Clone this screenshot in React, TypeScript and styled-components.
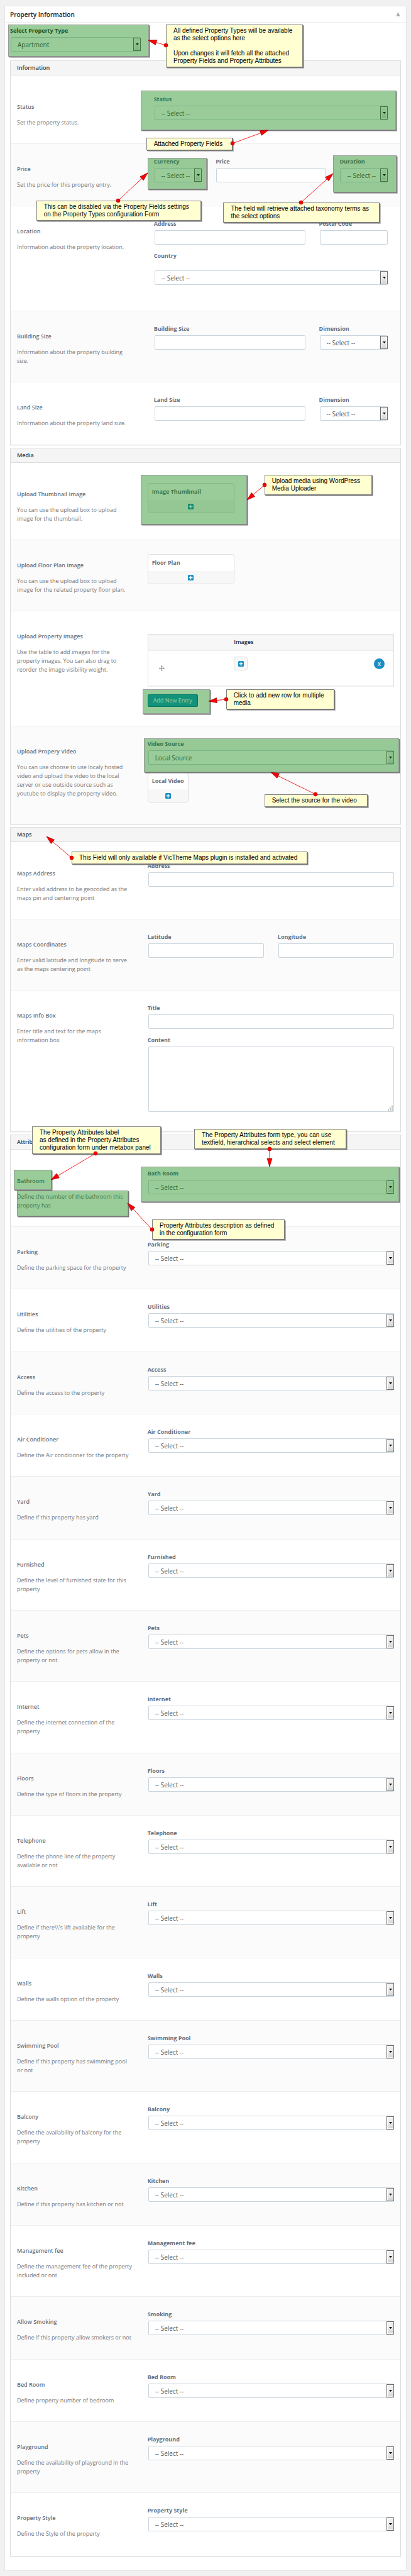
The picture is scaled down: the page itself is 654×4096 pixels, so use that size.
import React, { ReactNode, useId } from "react";
import styled, { createGlobalStyle, css } from "styled-components";

const GlobalStyle = createGlobalStyle`
  *, *::before, *::after { box-sizing: border-box; }
  body {
    margin: 0;
    background: #f1f1f1;
    color: #777;
    font-family: "Open Sans", "Noto Sans", sans-serif;
    font-size: 9px;
    line-height: 14px;
  }
  h2, h3, h4, p { margin: 0; }
  button, input, select, textarea { font-family: inherit; margin: 0; }
`;

/* ---------- page frame ---------- */

const Page = styled.main`
  padding: 9px 7px 8px;
`;

const Postbox = styled.section`
  background: #fff;
  border: 1px solid #e5e5e5;
`;

const PostboxHeader = styled.header`
  display: flex;
  align-items: center;
  justify-content: space-between;
  height: 26px;
  padding: 0 9px 0 8px;
  border-bottom: 1px solid #eee;
`;

const PostboxTitle = styled.h2`
  font-size: 10px;
  line-height: 14px;
  font-weight: 600;
  color: #23282d;
`;

const ToggleButton = styled.button`
  display: flex;
  padding: 0;
  border: 0;
  background: none;
`;

const PostboxBody = styled.div`
  padding: 7px 8px 18px;
`;

const TypeField = styled.div`
  width: 33.5%;
  margin-bottom: 14px;
`;

/* ---------- sections and rows ---------- */

const SectionBox = styled.section`
  border: 1px solid #ddd;
  box-shadow: 0 1px 1px rgba(0, 0, 0, 0.04);
  margin-bottom: 4px;
`;

const SectionHeader = styled.header`
  position: relative;
  display: flex;
  align-items: center;
  height: 23px;
  padding: 0 10px;
  background: #f5f5f5;
  border-bottom: 1px solid #ddd;
`;

const SectionTitle = styled.h3`
  font-size: 9px;
  line-height: 12px;
  font-weight: 600;
  color: #32373c;
`;

const Rows = styled.div`
  padding-top: 10px;
`;

const RowBox = styled.div<{ $minHeight?: number }>`
  display: flex;
  min-height: ${(p) => p.$minHeight ?? 0}px;
  border-bottom: 1px solid #eee;

  &:nth-child(even) {
    background: #fbfbfb;
  }
  &:nth-child(3n) {
    padding-bottom: 1px;
  }
  &:last-child {
    border-bottom-color: transparent;
  }
`;

const RowInfo = styled.div`
  flex: 0 0 33.33%;
  padding: 34px 10px 26px;
`;

const RowTitle = styled.h4`
  position: relative;
  width: fit-content;
  margin-bottom: 12px;
  font-size: 9px;
  line-height: 12px;
  font-weight: 600;
  color: #667080;
`;

const RowText = styled.div`
  position: relative;
  white-space: pre-line;
`;

const RowFields = styled.div<{ $top?: number; $inset?: boolean }>`
  flex: 1;
  min-width: 0;
  padding: ${(p) => p.$top ?? 22}px ${(p) => (p.$inset ? 20 : 10)}px 20px
    ${(p) => (p.$inset ? 21 : 11)}px;
  display: flex;
  flex-direction: column;
  gap: 12px;
`;

const Columns = styled.div`
  display: grid;
  grid-template-columns: repeat(12, minmax(0, 1fr));
  column-gap: 22px;
`;

const Column = styled.div<{ $span: number }>`
  grid-column: span ${(p) => p.$span};
`;

/* ---------- form controls ---------- */

const Anchor = styled.div<{ $fit?: boolean }>`
  position: relative;
  ${(p) => p.$fit && "width: fit-content;"}
`;

const FieldLabel = styled.label<{ $dark?: boolean; $loose?: boolean }>`
  display: block;
  margin-bottom: ${(p) => (p.$loose ? 17 : 4)}px;
  font-size: 9px;
  line-height: 12px;
  font-weight: 700;
  color: ${(p) => (p.$dark ? "#32373c" : "#667080")};
`;

const controlStyle = css`
  display: block;
  width: 100%;
  border: 1px solid #c9d5de;
  border-radius: 2px;
  background: #fff;
  color: #555;
  font-size: 10px;
`;

const TextInput = styled.input`
  ${controlStyle}
  height: 23px;
  padding: 0 10px;
`;

const TextArea = styled.textarea`
  ${controlStyle}
  height: 104px;
  padding: 6px 10px;
  resize: none;
`;

const SelectInput = styled.select`
  ${controlStyle}
  height: 23px;
  padding: 0 12px 0 10px;
  appearance: none;
`;

const ControlFrame = styled.div`
  position: relative;
  padding-left: 1px;
`;

const DropMark = styled.span`
  position: absolute;
  top: 1px;
  right: 0;
  bottom: 1px;
  width: 12px;
  display: flex;
  align-items: center;
  justify-content: center;
  border: 1px solid #707070;
  background: linear-gradient(#f2f2f2, #ebebeb 50%, #d4d4d4);
  box-shadow: inset 0 0 0 1px #f8f8f8;
  pointer-events: none;
`;

const Grip = styled.svg`
  position: absolute;
  right: 2px;
  bottom: 2px;
  pointer-events: none;
`;

/* ---------- media widgets ---------- */

const UploadBox = styled.div<{ $wide?: boolean }>`
  position: relative;
  width: ${(p) => (p.$wide ? "138px" : "fit-content")};
  border: 1px solid #ddd;
  border-radius: 4px;
  background: #fff;
`;

const UploadTitle = styled.div`
  padding: 7px 6px;
  font-weight: 700;
  line-height: 12px;
  color: #667080;
`;

const UploadButton = styled.button`
  display: flex;
  align-items: center;
  justify-content: center;
  width: 100%;
  height: 20px;
  padding: 0;
  border: 0;
  border-radius: 0 0 4px 4px;
  background: #f7f7f7;
`;

const ImageTable = styled.table`
  width: 100%;
  table-layout: fixed;
  border-collapse: separate;
  border-spacing: 0;
  border: 1px solid #ddd;
  border-bottom: 2px solid #eee;
  background: #fff;

  th {
    height: 26px;
    padding: 0;
    background: #f7f7f7;
    border-bottom: 2px solid #eee;
    font-weight: 600;
    text-align: left;
    color: #23282d;
  }
  td {
    height: 55px;
    padding: 9px 14px 0 0;
    vertical-align: top;
  }
  td:first-child {
    padding: 22px 0 0 17px;
  }
`;

const SmallUpload = styled.button`
  display: flex;
  align-items: center;
  justify-content: center;
  width: 22px;
  height: 22px;
  padding: 0;
  border: 1px solid #ddd;
  border-radius: 4px;
  background: #f7f7f7;
`;

const RemoveButton = styled.button`
  display: flex;
  align-items: center;
  justify-content: center;
  width: 17px;
  height: 17px;
  margin: 3px 0 0 auto;
  padding: 0;
  border: 0;
  border-radius: 50%;
  background: #158fc4;
  color: #fff;
  font-size: 8px;
  line-height: 10px;
  font-weight: 600;
`;

const PrimaryButton = styled.button`
  display: block;
  height: 20px;
  padding: 0 8px;
  border: 1px solid #0073aa;
  border-radius: 2px;
  background: #1e9fcc;
  color: #fff;
  font-size: 9px;
  line-height: 12px;
`;

/* ---------- annotations over the form ---------- */

const Highlight = styled.span<{ $inset: string }>`
  position: absolute;
  z-index: 1;
  inset: ${(p) => p.$inset};
  border: 1px solid rgba(128, 128, 128, 0.8);
  background: rgba(0, 128, 0, 0.4);
  background-clip: padding-box;
  box-shadow: 1px 1px 0 #777, 2px 2px 0 rgba(0, 0, 0, 0.25);
  pointer-events: none;
`;

const Note = styled.aside<{ $left: number; $top: number; $width: number }>`
  position: absolute;
  z-index: 2;
  left: ${(p) => p.$left}px;
  top: ${(p) => p.$top}px;
  width: ${(p) => p.$width}px;
  padding: 3px 0 3px 11px;
  border: 1px solid #808080;
  background: #ffffd2;
  box-shadow: 1px 1px 0 #777, 2px 2px 0 rgba(0, 0, 0, 0.25);
  color: #000;
  font-family: "Liberation Sans", Arial, sans-serif;
  font-size: 10px;
  line-height: 12px;
  font-weight: 400;
  white-space: pre;
`;

const PointerSvg = styled.svg`
  position: absolute;
  z-index: 3;
  left: 0;
  top: 0;
  overflow: visible;
  pointer-events: none;
`;

type Point = [number, number];

/* A dot on the note's edge, a thin line, and an arrow head at the tip. */
function Pointer({ from, to }: { from: Point; to: Point }) {
  const angle = (Math.atan2(to[1] - from[1], to[0] - from[0]) * 180) / Math.PI;
  return (
    <PointerSvg width="1" height="1" aria-hidden="true">
      <line x1={from[0]} y1={from[1]} x2={to[0]} y2={to[1]} stroke="#ff2020" />
      <path
        d="M0 0 L-13 -4 L-13 4 Z"
        transform={`translate(${to[0]} ${to[1]}) rotate(${angle})`}
        fill="#f00"
        stroke="#900"
        strokeWidth="0.7"
      />
      <circle cx={from[0]} cy={from[1]} r="3" fill="#f00" stroke="#a00" strokeWidth="0.7" />
    </PointerSvg>
  );
}

/* ---------- icons ---------- */

const PlusIcon = () => (
  <svg width="9" height="9" viewBox="0 0 12 12" aria-hidden="true">
    <rect width="12" height="12" rx="2" fill="#158fc4" />
    <path d="M6 2v8M2 6h8" stroke="#fff" strokeWidth="2" />
  </svg>
);

const MoveIcon = () => (
  <svg width="9" height="9" viewBox="0 0 12 12" aria-hidden="true">
    <path d="M6 1v10M1 6h10" stroke="#777" strokeWidth="1.2" />
    <path
      d="M6 0l2 2.4H4zM6 12l2-2.4H4zM0 6l2.4-2v4zM12 6l-2.4-2v4z"
      fill="#777"
    />
  </svg>
);

/* ---------- composed fields ---------- */

type FieldProps = { label: string; dark?: boolean; loose?: boolean; children?: ReactNode };

function SelectField({
  label,
  dark,
  loose,
  value = "-- Select --",
  children,
}: FieldProps & { value?: string }) {
  const id = useId();
  return (
    <Anchor>
      <FieldLabel htmlFor={id} $dark={dark} $loose={loose}>
        {label}
      </FieldLabel>
      <ControlFrame>
        <SelectInput id={id}>
          <option>{value}</option>
        </SelectInput>
        <DropMark>
          <svg width="5" height="3" viewBox="0 0 5 3" aria-hidden="true">
            <path d="M0 0h5L2.5 3z" fill="#000" />
          </svg>
        </DropMark>
      </ControlFrame>
      {children}
    </Anchor>
  );
}

function TextField({ label }: FieldProps) {
  const id = useId();
  return (
    <Anchor>
      <FieldLabel htmlFor={id}>{label}</FieldLabel>
      <ControlFrame>
        <TextInput id={id} type="text" />
      </ControlFrame>
    </Anchor>
  );
}

function AreaField({ label }: FieldProps) {
  const id = useId();
  return (
    <Anchor>
      <FieldLabel htmlFor={id}>{label}</FieldLabel>
      <ControlFrame>
        <TextArea id={id} />
        <Grip width="8" height="8" viewBox="0 0 8 8" aria-hidden="true">
          <path d="M6 0h2v2H6zM3 3h2v2H3zM6 3h2v2H6zM0 6h2v2H0zM3 6h2v2H3zM6 6h2v2H6z" fill="#bbb" />
        </Grip>
      </ControlFrame>
    </Anchor>
  );
}

function Upload({ title, wide, children }: { title: string; wide?: boolean; children?: ReactNode }) {
  return (
    <UploadBox $wide={wide}>
      <UploadTitle>{title}</UploadTitle>
      <UploadButton type="button" aria-label={`Upload ${title}`}>
        <PlusIcon />
      </UploadButton>
      {children}
    </UploadBox>
  );
}

type RowProps = {
  title: string;
  text: string;
  minHeight?: number;
  top?: number;
  inset?: boolean;
  titleNotes?: ReactNode;
  textNotes?: ReactNode;
  children: ReactNode;
};

function Row({ title, text, minHeight, top, inset, titleNotes, textNotes, children }: RowProps) {
  return (
    <RowBox $minHeight={minHeight}>
      <RowInfo>
        <RowTitle>
          {title}
          {titleNotes}
        </RowTitle>
        <RowText>
          {text}
          {textNotes}
        </RowText>
      </RowInfo>
      <RowFields $top={top} $inset={inset}>
        {children}
      </RowFields>
    </RowBox>
  );
}

function Section({ title, notes, children }: { title: string; notes?: ReactNode; children: ReactNode }) {
  return (
    <SectionBox>
      <SectionHeader>
        <SectionTitle>{title}</SectionTitle>
        {notes}
      </SectionHeader>
      <Rows>{children}</Rows>
    </SectionBox>
  );
}

const attributes: { title: string; label?: string; text: string }[] = [
  { title: "Parking", text: "Define the parking space for the property" },
  { title: "Utilities", text: "Define the utilities of the property" },
  { title: "Access", text: "Define the access to the property" },
  { title: "Air Conditioner", text: "Define the Air conditioner for the property" },
  { title: "Yard", text: "Define if this property has yard" },
  { title: "Furnished", text: "Define the level of furnished state for this\nproperty" },
  { title: "Pets", text: "Define the options for pets allow in the\nproperty or not" },
  { title: "Internet", text: "Define the internet connection of the\nproperty" },
  { title: "Floors", text: "Define the type of floors in the property" },
  { title: "Telephone", text: "Define the phone line of the property\navailable or not" },
  { title: "Lift", text: "Define if there\\\\'s lift available for the\nproperty" },
  { title: "Walls", text: "Define the walls option of the property" },
  { title: "Swimming Pool", text: "Define if this property has swimming pool\nor not" },
  { title: "Balcony", text: "Define the availability of balcony for the\nproperty" },
  { title: "Kitchen", text: "Define if this property has kitchen or not" },
  { title: "Management fee", text: "Define the management fee of the property\nincluded or not" },
  { title: "Allow Smoking", label: "Smoking", text: "Define if this property allow smokers or not" },
  { title: "Bed Room", text: "Define property number of bedroom" },
  { title: "Playground", text: "Define the availability of playground in the\nproperty" },
  { title: "Property Style", text: "Define the Style of the property" },
];

export default function App() {
  return (
    <Page>
      <GlobalStyle />
      <Postbox>
        <PostboxHeader>
          <PostboxTitle>Property Information</PostboxTitle>
          <ToggleButton type="button" aria-label="Toggle panel">
            <svg width="7" height="7" viewBox="0 0 7 7" aria-hidden="true">
              <path d="M3.5 0L6.5 7h-6z" fill="#aaa" />
            </svg>
          </ToggleButton>
        </PostboxHeader>

        <PostboxBody>
          <TypeField>
            <SelectField label="Select Property Type" value="Apartment" dark>
              <Highlight $inset="-4px -13px -8px -3px" />
              <Note $left={248} $top={-4} $width={218}>
                {"All defined Property Types will be available\nas the select options here\n\nUpon changes it will fetch all the attached\nProperty Fields and Property Attributes"}
              </Note>
              <Pointer from={[248, 29]} to={[220, 21]} />
            </SelectField>
          </TypeField>

          <Section title="Information">
            <Row title="Status" text="Set the property status." inset>
              <SelectField label="Status">
                <Highlight $inset="-8px -13px -16px -21px" />
                <Note $left={-12} $top={67} $width={137}>
                  Attached Property Fields
                </Note>
                <Pointer from={[125, 76]} to={[182, 55]} />
              </SelectField>
            </Row>
            <Row title="Price" text="Set the price for this property entry." inset>
              <Columns>
                <Column $span={3}>
                  <SelectField label="Currency">
                    <Highlight $inset="0 -8px -11px -10px" />
                    <Note $left={-187} $top={68} $width={262}>
                      {"This can be disabled via the Property Fields settings\non the Property Types configuration Form"}
                    </Note>
                    <Pointer from={[-57, 68]} to={[-10, 24]} />
                  </SelectField>
                </Column>
                <Column $span={6}>
                  <TextField label="Price" />
                </Column>
                <Column $span={3}>
                  <SelectField label="Duration">
                    <Highlight $inset="-4px -14px -16px -10px" />
                    <Note $left={-185} $top={71} $width={249}>
                      {"The field will retrieve attached taxonomy terms as\nthe select options"}
                    </Note>
                    <Pointer from={[-61, 71]} to={[-10, 25]} />
                  </SelectField>
                </Column>
              </Columns>
            </Row>
            <Row title="Location" text="Information about the property location." minHeight={167} inset>
              <Columns>
                <Column $span={8}>
                  <TextField label="Address" />
                </Column>
                <Column $span={4}>
                  <TextField label="Postal Code" />
                </Column>
              </Columns>
              <SelectField label="Country" loose />
            </Row>
            <Row title="Building Size" text={"Information about the property building\nsize."} inset>
              <Columns>
                <Column $span={8}>
                  <TextField label="Building Size" />
                </Column>
                <Column $span={4}>
                  <SelectField label="Dimension" />
                </Column>
              </Columns>
            </Row>
            <Row title="Land Size" text="Information about the property land size." inset>
              <Columns>
                <Column $span={8}>
                  <TextField label="Land Size" />
                </Column>
                <Column $span={4}>
                  <SelectField label="Dimension" />
                </Column>
              </Columns>
            </Row>
          </Section>

          <Section title="Media">
            <Row
              title="Upload Thumbnail Image"
              text={"You can use the upload box to upload\nimage for the thumbnail."}
            >
              <Upload title="Image Thumbnail" wide>
                <Highlight $inset="-14px -21px -19px -12px" />
                <Note $left={185} $top={-14} $width={171}>
                  {"Upload media using WordPress\nMedia Uploader"}
                </Note>
                <Pointer from={[185, 2]} to={[157, 26]} />
              </Upload>
            </Row>
            <Row
              title="Upload Floor Plan Image"
              text={"You can use the upload box to upload\nimage for the related property floor plan."}
            >
              <Upload title="Floor Plan" wide />
            </Row>
            <Row
              title="Upload Property Images"
              text={"Use the table to add images for the\nproperty images. You can also drag to\nreorder the image visibility weight."}
              top={36}
              minHeight={183}
            >
              <ImageTable>
                <colgroup>
                  <col width="35%" />
                  <col width="35%" />
                  <col width="30%" />
                </colgroup>
                <thead>
                  <tr>
                    <th aria-label="Order" />
                    <th>Images</th>
                    <th aria-label="Remove" />
                  </tr>
                </thead>
                <tbody>
                  <tr>
                    <td>
                      <MoveIcon />
                    </td>
                    <td>
                      <SmallUpload type="button" aria-label="Upload image">
                        <PlusIcon />
                      </SmallUpload>
                    </td>
                    <td>
                      <RemoveButton type="button">X</RemoveButton>
                    </td>
                  </tr>
                </tbody>
              </ImageTable>
              <Anchor $fit>
                <PrimaryButton type="button">Add New Entry</PrimaryButton>
                <Highlight $inset="-8px -19px -11px -8px" />
                <Note $left={125} $top={-8} $width={172}>
                  {"Click to add new row for multiple\nmedia"}
                </Note>
                <Pointer from={[125, 8]} to={[97, 11]} />
              </Anchor>
            </Row>
            <Row
              title="Upload Propery Video"
              text={"You can use choose to use localy hosted\nvideo and upload the video to the local\nserver or use outside source such as\nyoutube to display the property video."}
              minHeight={155}
            >
              <SelectField label="Video Source" value="Local Source">
                <Highlight $inset="-3px -8px -12px -6px" />
                <Note $left={186} $top={86} $width={164}>
                  Select the source for the video
                </Note>
                <Pointer from={[267, 86]} to={[196, 51]} />
              </SelectField>
              <Upload title="Local Video" />
            </Row>
          </Section>

          <Section
            title="Maps"
            notes={
              <>
                <Note $left={97} $top={38} $width={375}>
                  This Field will only available if VicTheme Maps plugin is installed and activated
                </Note>
                <Pointer from={[97, 48]} to={[57, 14]} />
              </>
            }
          >
            <Row
              title="Maps Address"
              text={"Enter valid address to be geocoded as the\nmaps pin and centering point"}
            >
              <TextField label="Address" />
            </Row>
            <Row
              title="Maps Coordinates"
              text={"Enter valid latitude and longitude to serve\nas the maps centering point"}
            >
              <Columns>
                <Column $span={6}>
                  <TextField label="Latitude" />
                </Column>
                <Column $span={6}>
                  <TextField label="Longitude" />
                </Column>
              </Columns>
            </Row>
            <Row
              title="Maps Info Box"
              text={"Enter title and text for the maps\ninformation box"}
              minHeight={224}
            >
              <TextField label="Title" />
              <AreaField label="Content" />
            </Row>
          </Section>

          <Section
            title="Attributes"
            notes={
              <>
                <Note $left={34} $top={-14} $width={205}>
                  {"The Property Attributes label\nas defined in the Property Attributes\nconfiguration form under metabox panel"}
                </Note>
                <Pointer from={[135, 29]} to={[64, 71]} />
                <Note $left={292} $top={-10} $width={242}>
                  {"The Property Attributes form type, you can use\ntextfield, hierarchical selects and select element"}
                </Note>
                <Pointer from={[412, 22]} to={[412, 50]} />
              </>
            }
          >
            <Row
              title="Bathroom"
              text={"Define the number of the bathroom this\nproperty has"}
              titleNotes={<Highlight $inset="-12px -11px -8px -5px" />}
              textNotes={
                <>
                  <Highlight $inset="-3px 10px -10px 0" />
                  <Note $left={215} $top={43} $width={211}>
                    {"Property Attributes description as defined\nin the configuration form"}
                  </Note>
                  <Pointer from={[215, 59]} to={[176, 17]} />
                </>
              }
            >
              <SelectField label="Bath Room">
                <Highlight $inset="-5px -8px -12px -11px" />
              </SelectField>
            </Row>
            {attributes.map((a) => (
              <Row key={a.title} title={a.title} text={a.text}>
                <SelectField label={a.label ?? a.title} />
              </Row>
            ))}
          </Section>
        </PostboxBody>
      </Postbox>
    </Page>
  );
}
